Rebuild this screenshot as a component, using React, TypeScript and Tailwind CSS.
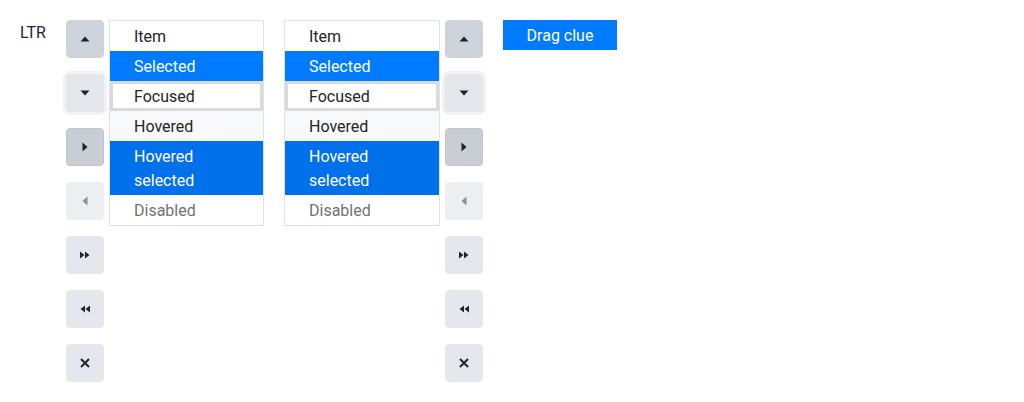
import React from "react";

type Icon = "up" | "down" | "right" | "left" | "ff" | "rw" | "x";

const Glyph = ({ name, color }: { name: Icon; color: string }) => {
  if (name === "x") {
    return (
      <svg width="12" height="12" viewBox="0 0 12 12">
        <path d="M2 2L10 10M10 2L2 10" stroke={color} strokeWidth="2" />
      </svg>
    );
  }
  const paths: Record<string, string> = {
    up: "M1.5 8.5L6 3.5L10.5 8.5Z",
    down: "M1.5 3.5L6 8.5L10.5 3.5Z",
    right: "M3.5 1.5L8.5 6L3.5 10.5Z",
    left: "M8.5 1.5L3.5 6L8.5 10.5Z",
    ff: "M1 2.5L5.5 6L1 9.5ZM6 2.5L10.5 6L6 9.5Z",
    rw: "M11 2.5L6.5 6L11 9.5ZM6 2.5L1.5 6L6 9.5Z",
  };
  return (
    <svg width="12" height="12" viewBox="0 0 12 12">
      <path d={paths[name]} fill={color} />
    </svg>
  );
};

const buttons: { icon: Icon; state: string }[] = [
  { icon: "up", state: "active" },
  { icon: "down", state: "focus" },
  { icon: "right", state: "hover" },
  { icon: "left", state: "disabled" },
  { icon: "ff", state: "normal" },
  { icon: "rw", state: "normal" },
  { icon: "x", state: "normal" },
];

const ToolButton = ({ icon, state }: { icon: Icon; state: string }) => {
  let cls = "bg-[#e4e7eb] border border-[#e4e7eb]";
  if (state === "active") cls = "bg-[#ced3db] border border-[#ced3db]";
  if (state === "focus") cls = "bg-[#e4e7eb] border border-[#e4e7eb] shadow-[0_0_0_3px_#f1f2f4]";
  if (state === "hover") cls = "bg-[#c9ced5] border border-[#bfc4cb]";
  if (state === "disabled") cls = "bg-[#eceef1] border border-[#eceef1]";
  return (
    <div className={`w-[38px] h-[38px] rounded-[4px] flex items-center justify-center ${cls}`}>
      <Glyph name={icon} color={state === "disabled" ? "#8a8f95" : "#212529"} />
    </div>
  );
};

const ToolBar = () => (
  <div className="flex flex-col gap-4">
    {buttons.map((b, i) => (
      <ToolButton key={i} icon={b.icon} state={b.state} />
    ))}
  </div>
);

const ListBox = ({ width }: { width: string }) => (
  <div className={`${width} border border-[#dee2e6] bg-white self-start`}>
    <div className="px-6 pt-[4px] pb-[2px] text-[#212529]">Item</div>
    <div className="px-6 pt-[4px] pb-[2px] bg-[#007bff] text-white">Selected</div>
    <div className="px-6 pt-[4px] pb-[2px] text-[#212529] shadow-[inset_0_0_0_3px_#dadada]">Focused</div>
    <div className="px-6 pt-[4px] pb-[2px] bg-[#f8f9fa] text-[#212529]">Hovered</div>
    <div className="px-6 pt-[4px] pb-[2px] bg-[#0070eb] text-white">
      Hovered
      <br />
      selected
    </div>
    <div className="px-6 pt-[4px] pb-[2px] text-[#212529] opacity-65">Disabled</div>
  </div>
);

export default function App() {
  return (
    <div className="w-[1024px] h-[402px] bg-white font-['Roboto',sans-serif] text-[16px] leading-6 text-[#212529]">
      <div className="flex pt-5 pl-5">
        <div className="w-[46px] pt-[1px]">LTR</div>
        <ToolBar />
        <div className="ml-[5px]">
          <ListBox width="w-[155px]" />
        </div>
        <div className="ml-5 mr-[5px]">
          <ListBox width="w-[156px]" />
        </div>
        <ToolBar />
        <div className="ml-5 self-start bg-[#007bff] text-white w-[114px] h-[30px] pt-[2px] flex items-center justify-center">
          Drag clue
        </div>
      </div>
    </div>
  );
}
